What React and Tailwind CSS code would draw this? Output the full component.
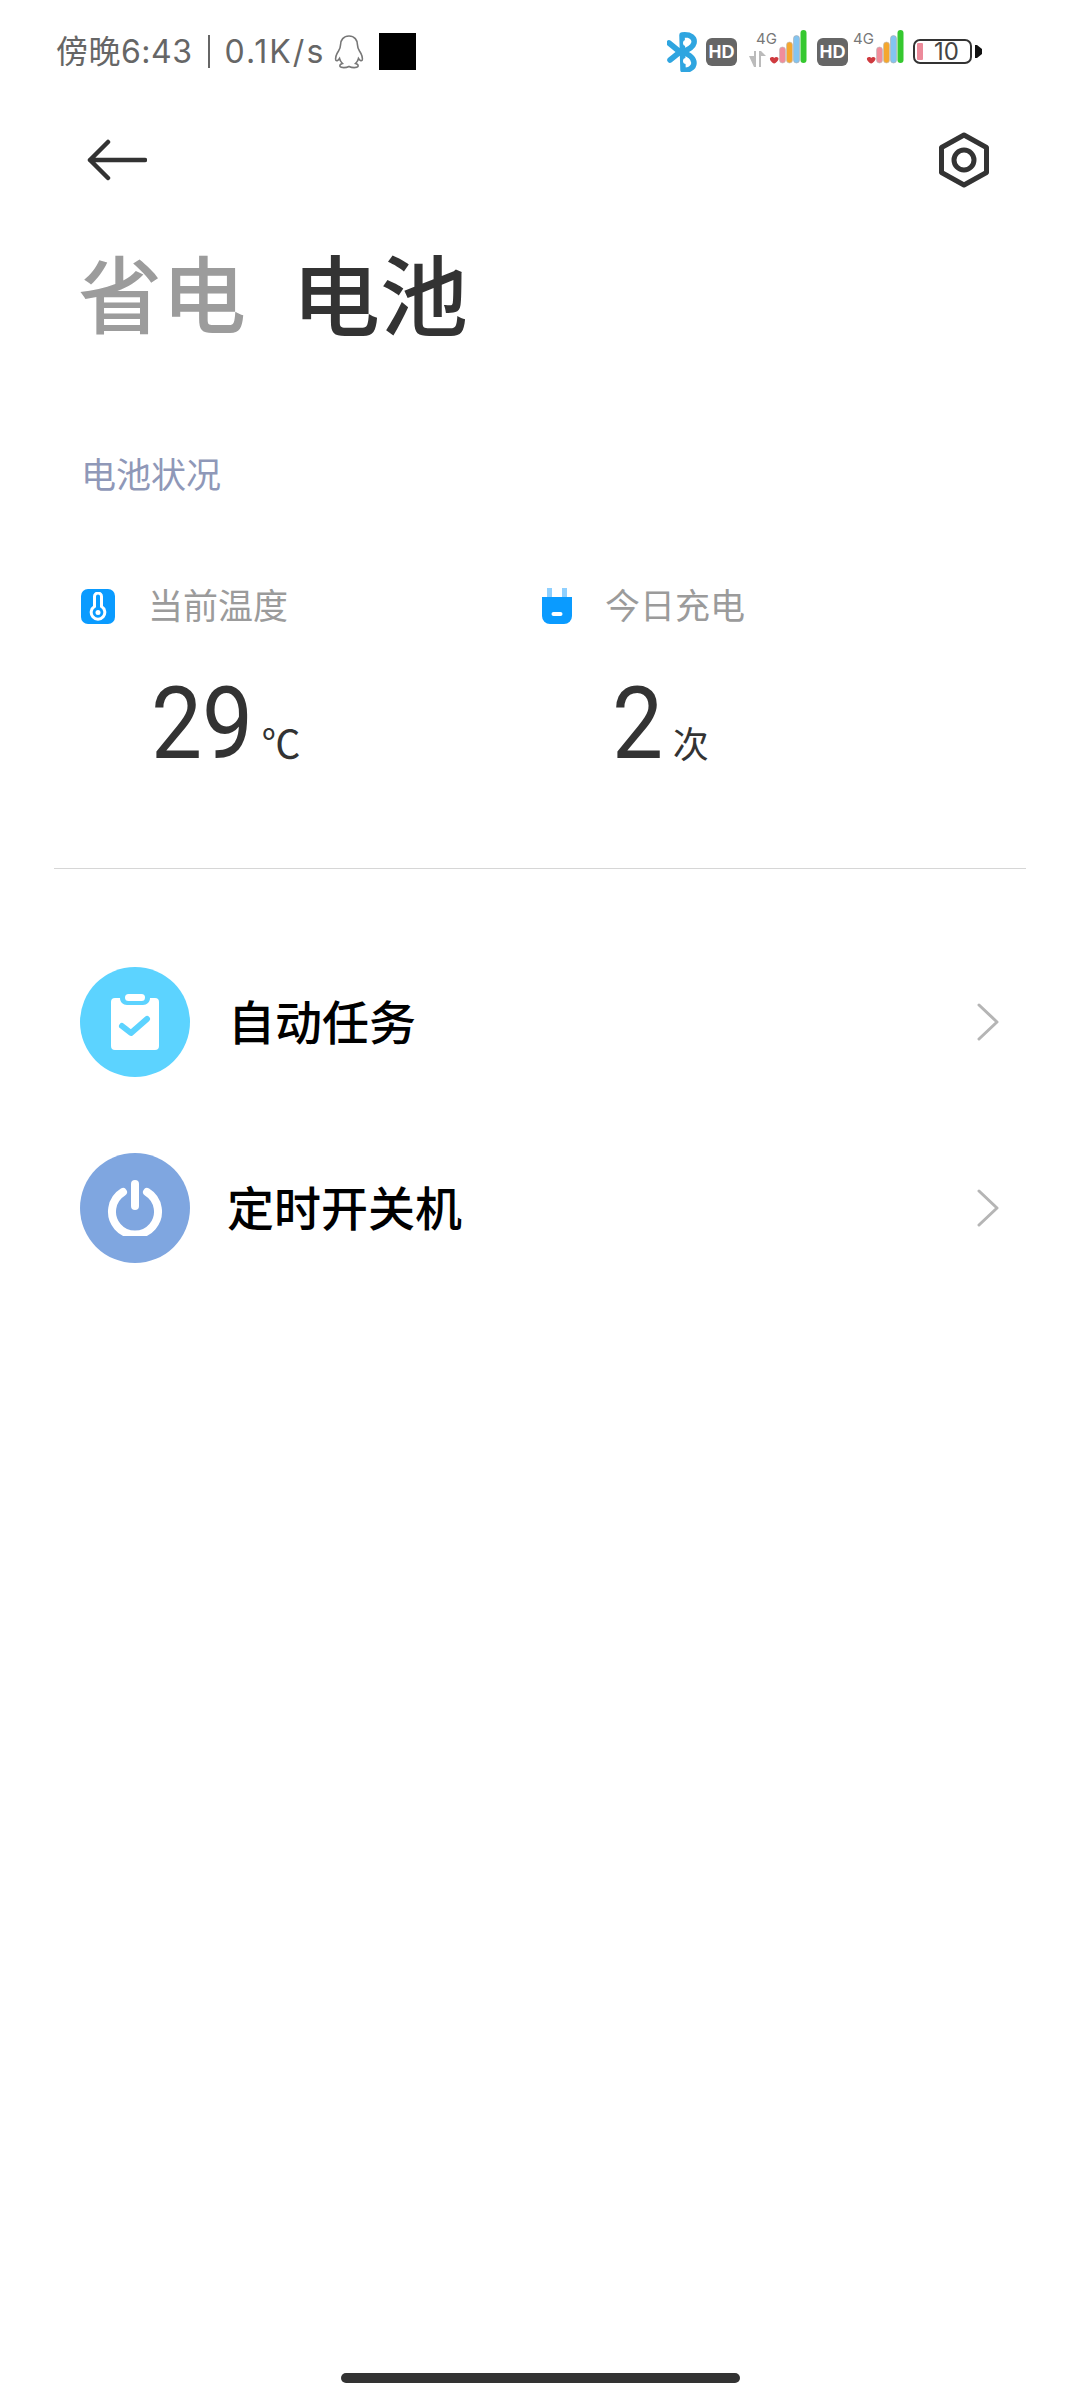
const sans = "font-['Inter','Noto_Sans_CJK_SC',sans-serif]";

function Signal({ arrows }) {
  return (
    <svg width="60" height="40" viewBox="0 0 60 40" className="shrink-0">
      <text x="7" y="14" fontSize="15" fill="#777" fontFamily="Inter">4G</text>
      {arrows && <path d="M0 27h5v-5h2v16h-2zM10 38v-16h2l5 5h-5v11z" fill="#bbb" transform="translate(0 -1)" />}
      <path d="M21 28c1.500-1.600 3.500-1 4.200 0 .8-1 2.800-1.600 4.200 0 .6 2-2 5-4.200 5.500-2.200-.5-4.800-3.500-4.200-5.500z" fill="#cf3a3f" />
      <rect x="30.500" y="17" width="6" height="16" rx="3" fill="#f08d9b" stroke="#bbb" strokeWidth=".6" />
      <rect x="37.500" y="12" width="6" height="21" rx="3" fill="#f5a72e" stroke="#bbb" strokeWidth=".6" />
      <rect x="44.500" y="5.500" width="6" height="27.500" rx="3" fill="#83c4f0" stroke="#aaa" strokeWidth=".6" />
      <rect x="51.500" y="0" width="6" height="33" rx="3" fill="#35c82f" />
    </svg>
  );
}

function Hd() {
  return (
    <div className="w-[31px] h-[28px] rounded-[6px] bg-[#666666] flex items-center justify-center text-white text-[18px] font-bold leading-none font-['Liberation_Sans',sans-serif] shrink-0">
      HD
    </div>
  );
}

function StatusBar() {
  return (
    <div className={`flex items-center justify-between h-[37px] mt-[33px] pl-[56px] pr-[98px] text-[#666666] ${sans}`}>
      <div className="flex items-center">
        <span className="text-[32px] leading-none whitespace-nowrap tracking-[0.5px]">傍晚6:43</span>
        <span className="w-[2px] h-[33px] bg-[#666666] ml-[15px] mr-[15px]" />
        <span className="text-[32px] leading-none whitespace-nowrap tracking-[2px]">0.1K/s</span>
        <svg width="32" height="36" viewBox="0 0 32 36" fill="none" stroke="#777" strokeWidth="1.600" className="ml-[8px]">
          <path d="M16 2c-5.500 0-8.500 4-8.500 9 0 2-.5 3.500-2 6-2 3-3.500 7-2.500 9.500 1 .8 2.500-.5 3.500-2 .5 2.500 2 4 3 5-2 .5-3 1.500-2.500 3 1 1.500 6 1.500 9 0 3 1.500 8 1.500 9 0 .5-1.500-.5-2.500-2.500-3 1-1 2.500-2.500 3-5 1 1.500 2.500 2.800 3.500 2 1-2.500-.5-6.500-2.500-9.500-1.500-2.500-2-4-2-6 0-5-3-9-8.500-9z" />
        </svg>
        <div className="w-[37px] h-[37px] bg-black ml-[14px]" />
      </div>
      <div className="flex items-center">
        <svg width="30" height="40" viewBox="0 0 30 40" fill="none" className="shrink-0">
          <path d="M2 11 13 20 3 28M15 3c9-1 13 3 12 8-1 4-6 7-12 9 6 2 12 5 12 11 0 5-6 8-11 7z" stroke="#2fa5e0" strokeWidth="5.500" strokeLinecap="round" strokeLinejoin="round" />
          <circle cx="19" cy="11" r="3" fill="white" />
          <circle cx="19" cy="29" r="3" fill="white" />
        </svg>
        <div className="ml-[9px]"><Hd /></div>
        <div className="ml-[12px] mb-[4px]"><Signal arrows /></div>
        <div className="ml-[8px]"><Hd /></div>
        <div className="ml-[-2px] mb-[4px]"><Signal /></div>
        <div className="ml-[7px] relative w-[59px] h-[25px] rounded-[7px] border-2 border-[#333333] flex items-center justify-center">
          <div className="absolute left-[2px] top-[2px] w-[6px] h-[17px] bg-[#ec8a9a] rounded-[1px]" />
          <span className="text-[24px] leading-none text-[#444444] ml-[8px]">10</span>
        </div>
        <svg width="7" height="13" viewBox="0 0 7 13" className="ml-[3px] shrink-0">
          <path d="M0 0h2l5 4v5l-5 4H0z" fill="#111" />
        </svg>
      </div>
    </div>
  );
}

function Stat({ icon, label, value, unit, width, unitClass }) {
  return (
    <div className={width}>
      <div className="flex items-center h-[36px]">
        {icon}
        <span className="text-[35px] leading-none text-[#9b9b9b] whitespace-nowrap">{label}</span>
      </div>
      <div className="flex items-baseline mt-[50px] pl-[70px]">
        <span className="text-[101px] leading-[100px] text-[#333333] font-['Roboto',sans-serif] inline-block origin-left scale-x-[0.9]">{value}</span>
        <span className={`leading-none text-[#333333] font-['Noto_Sans_CJK_SC',sans-serif] ${unitClass}`}>{unit}</span>
      </div>
    </div>
  );
}

function Row({ bg, icon, label, labelClass, mt }) {
  return (
    <div className={`flex items-center h-[110px] pl-[80px] pr-[81px] ${mt}`}>
      <div className={`w-[110px] h-[110px] rounded-full flex items-center justify-center shrink-0 ${bg}`}>{icon}</div>
      <span className={`text-[47px] leading-none text-black font-medium whitespace-nowrap ${labelClass}`}>{label}</span>
      <svg width="22" height="38" viewBox="0 0 22 38" fill="none" className="ml-auto">
        <path d="M2 2 20 19 2 36" stroke="#b5b5b5" strokeWidth="3" strokeLinecap="round" strokeLinejoin="round" />
      </svg>
    </div>
  );
}

export default function App() {
  return (
    <div className={`w-[1080px] h-[2400px] bg-white flex flex-col overflow-hidden ${sans}`}>
      <StatusBar />

      <div className="flex items-center justify-between h-[54px] mt-[63px] pl-[87px] pr-[90px]">
        <svg width="60" height="42" viewBox="0 0 60 42" fill="none">
          <path d="M58 21H3M21 3 3 21l18 18" stroke="#333333" strokeWidth="4.500" strokeLinecap="round" strokeLinejoin="round" />
        </svg>
        <svg width="52" height="56" viewBox="0 0 52 56" fill="none">
          <path d="M26 3 48.500 15.500v25L26 53 3.500 40.500v-25z" stroke="#333333" strokeWidth="5" strokeLinejoin="round" />
          <circle cx="26" cy="28" r="10" stroke="#333333" strokeWidth="5" />
        </svg>
      </div>

      <div className="flex items-center h-[90px] mt-[65px] pl-[78px] leading-none font-medium">
        <span className="text-[84px] text-[#9c9c9c]">省电</span>
        <span className="text-[88px] text-[#333333] ml-[46px]">电池</span>
      </div>

      <div className="mt-[116px] pl-[81px] h-[36px] text-[35px] leading-none text-[#8f98b8]">电池状况</div>

      <div className="flex mt-[94px] pl-[81px]">
        <Stat
          width="w-[461px]"
          label="当前温度"
          value="29"
          unit="℃"
          unitClass="text-[39px] ml-[-3px]"
          icon={
            <div className="w-[34px] h-[35px] rounded-[7px] bg-[#0a9bff] flex items-center justify-center mr-[33px] shrink-0">
              <svg width="18" height="29" viewBox="0 0 18 29" fill="none">
                <path d="M5.500 4.500a3.500 3.500 0 0 1 7 0v10a6.800 6.800 0 1 1-7 0z" stroke="white" strokeWidth="3" />
                <circle cx="9" cy="20.500" r="2.500" fill="white" />
              </svg>
            </div>
          }
        />
        <Stat
          label="今日充电"
          value="2"
          unit="次"
          unitClass="text-[36px] ml-[4px]"
          icon={
            <svg width="30" height="36" viewBox="0 0 30 36" fill="none" className="mr-[33px] shrink-0">
              <rect x="5" y="0" width="5" height="10" fill="#8fd0ff" />
              <rect x="20" y="0" width="5" height="10" fill="#8fd0ff" />
              <path d="M0 9h30v19a8 8 0 0 1-8 8H8a8 8 0 0 1-8-8z" fill="#0a9bff" />
              <rect x="9.500" y="24" width="11" height="4" rx="2" fill="white" />
            </svg>
          }
        />
      </div>

      <div className="h-[1px] bg-[#d6d6d6] mx-[54px] mt-[94px]" />

      <Row
        mt="mt-[98px]"
        bg="bg-[#5cd3ff]"
        labelClass="ml-[38px]"
        label="自动任务"
        icon={
          <svg width="50" height="56" viewBox="0 0 50 56" fill="none">
            <path d="M5 4h5c0 4 3 7 7 7h16c4 0 7-3 7-7h5a4 4 0 0 1 4 4v44a4 4 0 0 1-4 4H5a4 4 0 0 1-4-4V8a4 4 0 0 1 4-4z" fill="white" />
            <rect x="15" y="0" width="20" height="7" rx="3.500" fill="white" />
            <path d="M12 32 21 39 37 25" stroke="#5cd3ff" strokeWidth="6" strokeLinecap="round" strokeLinejoin="round" />
          </svg>
        }
      />
      <Row
        mt="mt-[76px]"
        bg="bg-[#7fa6e0]"
        labelClass="ml-[37px]"
        label="定时开关机"
        icon={
          <svg width="56" height="56" viewBox="0 0 56 56" fill="none">
            <path d="M16 12a23 23 0 1 0 24 0" stroke="white" strokeWidth="8" strokeLinecap="round" />
            <path d="M28 4v22" stroke="white" strokeWidth="8" strokeLinecap="round" />
          </svg>
        }
      />

      <div className="mt-auto mb-[17px] mx-auto w-[399px] h-[10px] rounded-full bg-[#333333]" />
    </div>
  );
}
